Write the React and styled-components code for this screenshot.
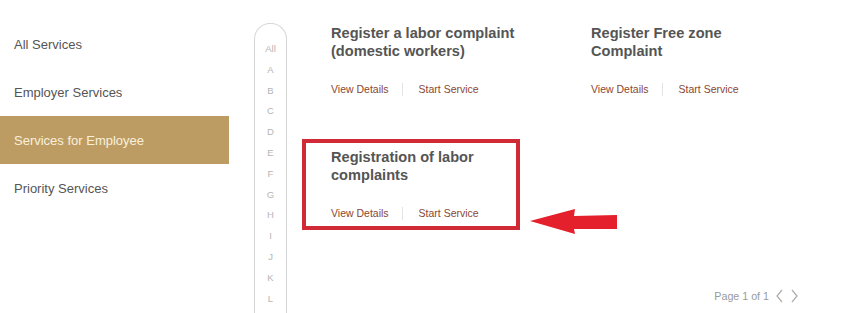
import React from "react";
import styled, { createGlobalStyle } from "styled-components";

const GlobalStyle = createGlobalStyle`
  body {
    margin: 0;
    background: #ffffff;
    font-family: "Liberation Sans", Arial, sans-serif;
  }
`;

const Page = styled.div`
  display: flex;
  width: 854px;
  height: 313px;
  overflow: hidden;
`;

const Sidebar = styled.ul`
  list-style: none;
  margin: 0;
  padding: 20px 0 0;
  width: 229px;
  flex-shrink: 0;
`;

const SideItem = styled.li`
  height: 48px;
  display: flex;
  align-items: center;
  padding-left: 14px;
  font-size: 13px;
  color: ${(props) => (props.active ? "#f9f0dc" : "#555555")};
  background: ${(props) => (props.active ? "#bd9c63" : "transparent")};
`;

const Rail = styled.ul`
  list-style: none;
  margin: 23px 0 0 25px;
  padding: 15px 0 0;
  width: 31px;
  height: 320px;
  flex-shrink: 0;
  border: 1px solid #d6d6d6;
  border-bottom: none;
  border-radius: 16px 16px 0 0;
`;

const Letter = styled.li`
  height: 20.8px;
  line-height: 20.8px;
  text-align: center;
  font-size: 9.5px;
  color: #b5b5b5;
`;

const Main = styled.div`
  flex: 1;
  display: flex;
  flex-direction: column;
  padding: 15px 0 0 15px;
`;

const Grid = styled.div`
  display: grid;
  grid-template-columns: 260px 260px;
  grid-auto-rows: 91px;
  row-gap: 33px;
`;

const Card = styled.div`
  position: relative;
  width: 218px;
  box-sizing: border-box;
  border: 4px solid ${(props) => (props.highlight ? "#cf2a35" : "transparent")};
  padding: 5px 0 0 25px;
`;

const Title = styled.h3`
  margin: 0;
  height: 36px;
  font-size: 14.6px;
  line-height: 18px;
  font-weight: bold;
  color: #555555;
  white-space: nowrap;
`;

const Links = styled.div`
  display: flex;
  align-items: center;
  margin-top: 22px;
`;

const LinkText = styled.a`
  font-size: 10.5px;
  line-height: 14px;
  color: #8a4632;
  text-decoration: none;
`;

const Divider = styled.span`
  width: 1px;
  height: 13px;
  margin: 0 16px 0 13px;
  background: #e3e3e3;
`;

const Arrow = styled.svg`
  position: absolute;
  left: 222px;
  top: 64px;
`;

const Pager = styled.div`
  margin-top: auto;
  margin-bottom: 10px;
  align-self: flex-end;
  margin-right: 55px;
  display: flex;
  align-items: center;
  gap: 6px;
  font-size: 10.7px;
  color: #9a9a9a;
`;

const letters = ["All", "A", "B", "C", "D", "E", "F", "G", "H", "I", "J", "K", "L"];

const cards = [
  { title: ["Register a labor complaint", "(domestic workers)"] },
  { title: ["Register Free zone", "Complaint"] },
  { title: ["Registration of labor", "complaints"], highlight: true },
];

const Chevron = ({ dir }) => (
  <svg width="9" height="14" viewBox="0 0 9 14">
    <path
      d={dir === "left" ? "M7 1 L2 7 L7 13" : "M2 1 L7 7 L2 13"}
      fill="none"
      stroke="#b0b0b0"
      strokeWidth="1.3"
    />
  </svg>
);

export default function App() {
  return (
    <>
      <GlobalStyle />
      <Page>
        <Sidebar>
          <SideItem>All Services</SideItem>
          <SideItem>Employer Services</SideItem>
          <SideItem active>Services for Employee</SideItem>
          <SideItem>Priority Services</SideItem>
        </Sidebar>
        <Rail>
          {letters.map((l) => (
            <Letter key={l}>{l}</Letter>
          ))}
        </Rail>
        <Main>
          <Grid>
            {cards.map((c, i) => (
              <Card key={i} highlight={c.highlight}>
                <Title>
                  {c.title[0]}
                  <br />
                  {c.title[1]}
                </Title>
                <Links>
                  <LinkText href="#">View Details</LinkText>
                  <Divider />
                  <LinkText href="#">Start Service</LinkText>
                </Links>
                {c.highlight && (
                  <Arrow width="92" height="28" viewBox="0 0 92 28">
                    <path
                      d="M2 14 L47 2 L46 9 L89 8 L89 22 L46 22 L47 27 Z"
                      fill="#e3202b"
                    />
                  </Arrow>
                )}
              </Card>
            ))}
          </Grid>
          <Pager>
            <span>Page 1 of 1</span>
            <Chevron dir="left" />
            <Chevron dir="right" />
          </Pager>
        </Main>
      </Page>
    </>
  );
}
